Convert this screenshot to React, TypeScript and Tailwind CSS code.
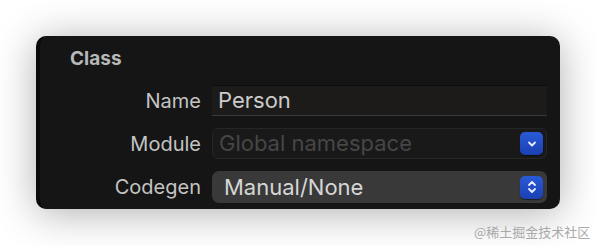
import React from 'react';

const font = { fontFamily: 'Inter, "Liberation Sans", sans-serif' };

const BlueButton: React.FC<{ double?: boolean }> = ({ double }) => (
  <div className="flex h-[23px] w-[23px] items-center justify-center rounded-[5px] bg-gradient-to-b from-[#2a5ad8] to-[#1b40b2] shadow-[0_1px_1px_rgba(0,0,0,0.5)]">
    {double ? (
      <svg width="10" height="14" viewBox="0 0 10 14" fill="none" stroke="#e8eeff" strokeWidth="1.8" strokeLinecap="round" strokeLinejoin="round">
        <path d="M2 5 L5 2 L8 5" />
        <path d="M2 9 L5 12 L8 9" />
      </svg>
    ) : (
      <svg width="10" height="8" viewBox="0 0 10 8" fill="none" stroke="#e8eeff" strokeWidth="1.8" strokeLinecap="round" strokeLinejoin="round">
        <path d="M2 2.5 L5 5.5 L8 2.5" />
      </svg>
    )}
  </div>
);

const Row: React.FC<{ label: string; children: React.ReactNode }> = ({ label, children }) => (
  <div className="flex items-center gap-[11px]">
    <div className="w-[161px] text-right text-[20px] leading-none text-[#c4c4c4]">{label}</div>
    <div className="w-[335px]">{children}</div>
  </div>
);

export default function App() {
  return (
    <div className="relative h-[246px] w-[596px] overflow-hidden bg-white pl-[36px] pt-[36px]" style={font}>
      <div className="h-[173px] w-[524px] rounded-[10px] border-l-[4px] border-[#0a0a0a] bg-[#151515] pr-[12px] pt-[12px] shadow-[0_4px_40px_rgba(0,0,0,0.32)]">
        <div className="pl-[30px] pt-[1px] text-[19px] font-bold leading-[20px] text-[#b8b8b8]">Class</div>
        <div className="mt-[16px] flex flex-col gap-[12px]">
          <Row label="Name">
            <div className="flex h-[31px] items-center border-t border-t-[#0e0e0e] border-b border-b-[#393939] bg-[#1c1b1a] pl-[6px] text-[22px] text-[#cbcbcb]">
              Person
            </div>
          </Row>
          <Row label="Module">
            <div className="flex h-[31px] items-center justify-between rounded-[6px] border border-[#262626] bg-[#191919] pl-[6px] pr-[3px] text-[22px] text-[#464646]">
              <span>Global namespace</span>
              <BlueButton />
            </div>
          </Row>
          <Row label="Codegen">
            <div className="flex h-[32px] items-center justify-between rounded-[7px] bg-[#393939] pl-[12px] pr-[4px] text-[22px] text-[#d6d6d6]">
              <span>Manual/None</span>
              <BlueButton double />
            </div>
          </Row>
        </div>
      </div>
      <div
        className="absolute left-[474px] top-[224px] text-[13px] leading-[16px] text-[#a9a9a9]"
        style={{ fontFamily: '"Noto Sans CJK SC", sans-serif' }}
      >
        @稀土掘金技术社区
      </div>
    </div>
  );
}
